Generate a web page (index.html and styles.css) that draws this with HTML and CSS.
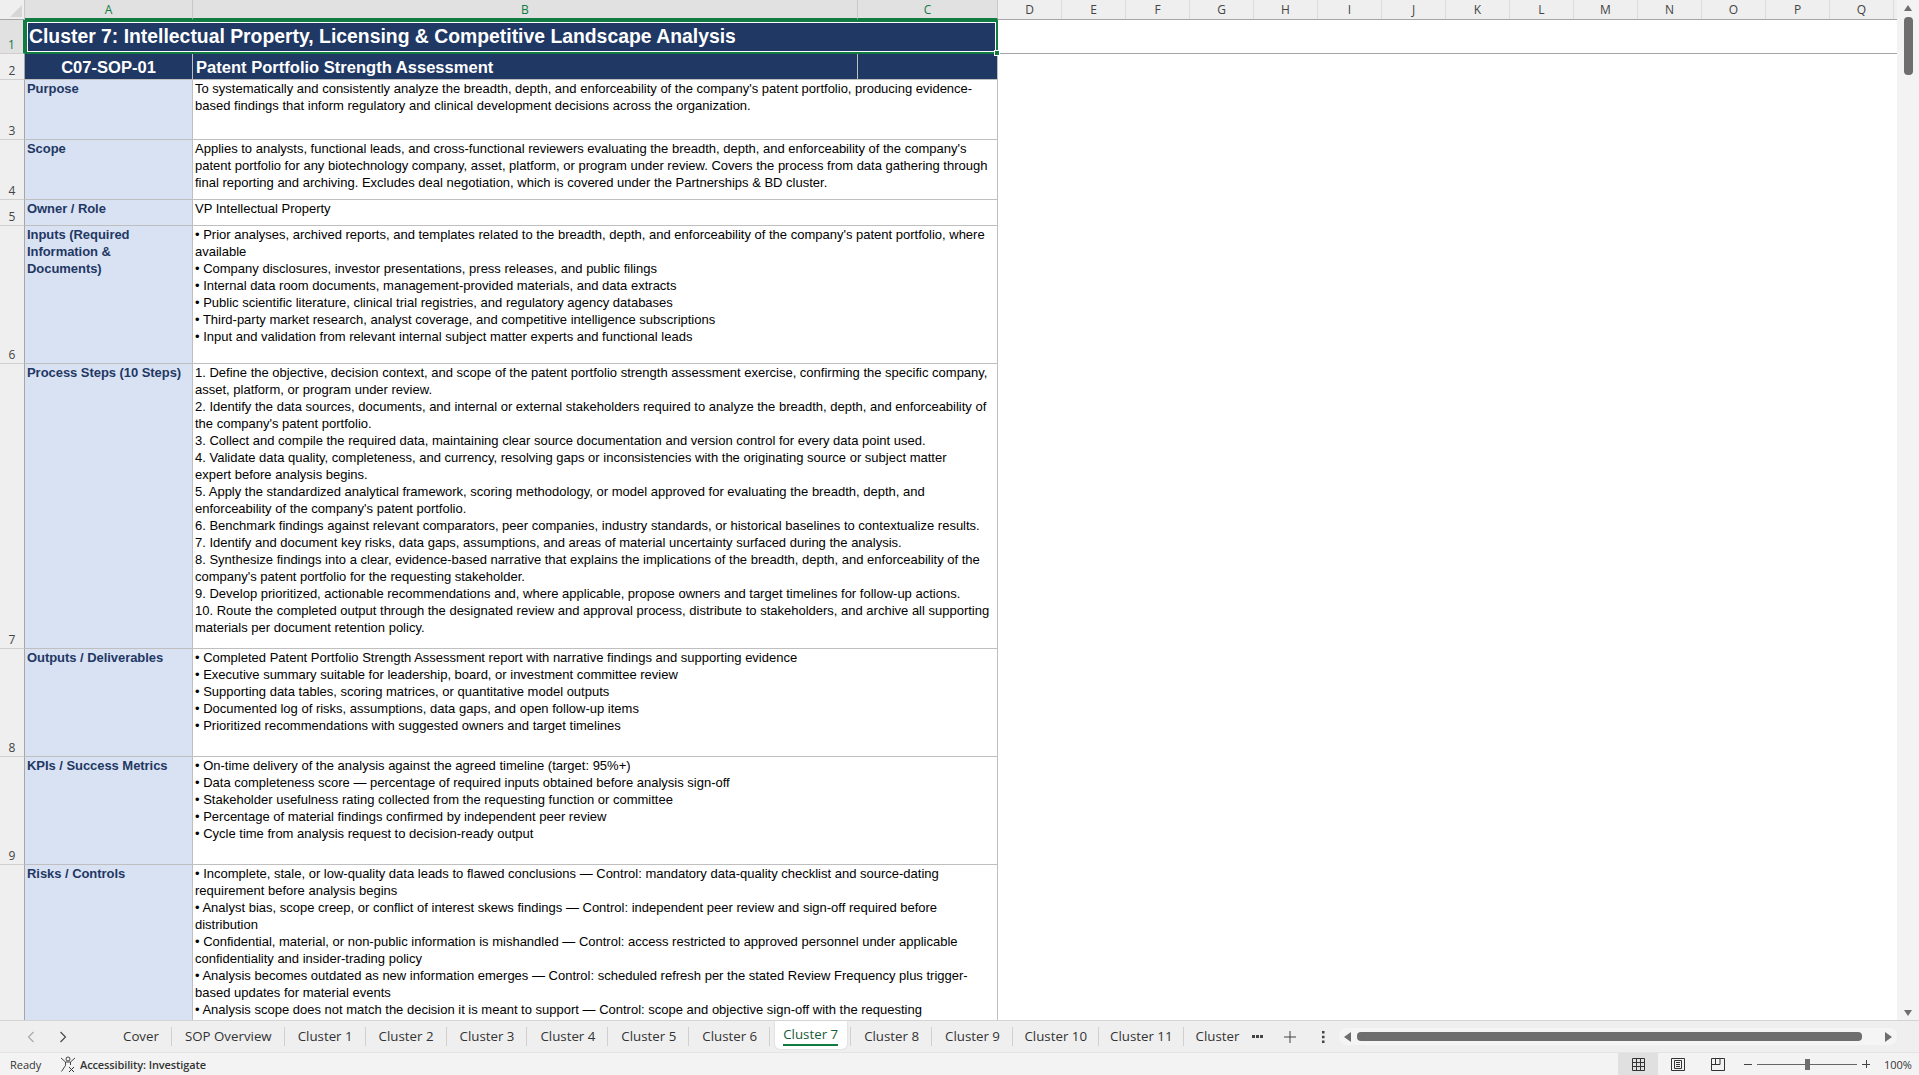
FILE: index.html
```html
<!DOCTYPE html>
<html lang="en">
<head>
  <meta charset="UTF-8" />
  <title>SOP Library - Cluster 7</title>
  <link rel="stylesheet" href="styles.css">
</head>
<body>

<div class="app">
  <div class="sheet-area">
    <div class="sheet">
      <!-- column headers -->
      <div class="corner"><span class="corner-mark"></span></div>
      <div class="col-head selected">A</div>
      <div class="col-head selected">B</div>
      <div class="col-head selected">C</div>
      <div class="col-rest">
        <span>D</span><span>E</span><span>F</span><span>G</span><span>H</span><span>I</span><span>J</span>
        <span>K</span><span>L</span><span>M</span><span>N</span><span>O</span><span>P</span><span>Q</span>
      </div>

      <!-- row 1 -->
      <div class="row-num selected">1</div>
      <div class="cell title">Cluster 7: Intellectual Property, Licensing &amp; Competitive Landscape Analysis<span class="fill-handle"></span></div>
      <div class="empty frozen"></div>

      <!-- row 2 -->
      <div class="row-num">2</div>
      <div class="cell head head-id">C07-SOP-01</div>
      <div class="cell head head-name">Patent Portfolio Strength Assessment</div>
      <div class="cell head"></div>
      <div class="empty span-rows"></div>

      <!-- row 3 -->
      <div class="row-num">3</div>
      <div class="cell label">Purpose</div>
      <div class="cell body">To systematically and consistently analyze the breadth, depth, and enforceability of the company's patent portfolio, producing evidence-<br>based findings that inform regulatory and clinical development decisions across the organization.</div>

      <!-- row 4 -->
      <div class="row-num">4</div>
      <div class="cell label">Scope</div>
      <div class="cell body">Applies to analysts, functional leads, and cross-functional reviewers evaluating the breadth, depth, and enforceability of the company's<br>patent portfolio for any biotechnology company, asset, platform, or program under review. Covers the process from data gathering through<br>final reporting and archiving. Excludes deal negotiation, which is covered under the Partnerships &amp; BD cluster.</div>

      <!-- row 5 -->
      <div class="row-num">5</div>
      <div class="cell label">Owner / Role</div>
      <div class="cell body">VP Intellectual Property</div>

      <!-- row 6 -->
      <div class="row-num">6</div>
      <div class="cell label">Inputs (Required<br>Information &amp;<br>Documents)</div>
      <div class="cell body">• Prior analyses, archived reports, and templates related to the breadth, depth, and enforceability of the company's patent portfolio, where<br>available<br>• Company disclosures, investor presentations, press releases, and public filings<br>• Internal data room documents, management-provided materials, and data extracts<br>• Public scientific literature, clinical trial registries, and regulatory agency databases<br>• Third-party market research, analyst coverage, and competitive intelligence subscriptions<br>• Input and validation from relevant internal subject matter experts and functional leads</div>

      <!-- row 7 -->
      <div class="row-num">7</div>
      <div class="cell label">Process Steps (10 Steps)</div>
      <div class="cell body">1. Define the objective, decision context, and scope of the patent portfolio strength assessment exercise, confirming the specific company,<br>asset, platform, or program under review.<br>2. Identify the data sources, documents, and internal or external stakeholders required to analyze the breadth, depth, and enforceability of<br>the company's patent portfolio.<br>3. Collect and compile the required data, maintaining clear source documentation and version control for every data point used.<br>4. Validate data quality, completeness, and currency, resolving gaps or inconsistencies with the originating source or subject matter<br>expert before analysis begins.<br>5. Apply the standardized analytical framework, scoring methodology, or model approved for evaluating the breadth, depth, and<br>enforceability of the company's patent portfolio.<br>6. Benchmark findings against relevant comparators, peer companies, industry standards, or historical baselines to contextualize results.<br>7. Identify and document key risks, data gaps, assumptions, and areas of material uncertainty surfaced during the analysis.<br>8. Synthesize findings into a clear, evidence-based narrative that explains the implications of the breadth, depth, and enforceability of the<br>company's patent portfolio for the requesting stakeholder.<br>9. Develop prioritized, actionable recommendations and, where applicable, propose owners and target timelines for follow-up actions.<br>10. Route the completed output through the designated review and approval process, distribute to stakeholders, and archive all supporting<br>materials per document retention policy.</div>

      <!-- row 8 -->
      <div class="row-num">8</div>
      <div class="cell label">Outputs / Deliverables</div>
      <div class="cell body">• Completed Patent Portfolio Strength Assessment report with narrative findings and supporting evidence<br>• Executive summary suitable for leadership, board, or investment committee review<br>• Supporting data tables, scoring matrices, or quantitative model outputs<br>• Documented log of risks, assumptions, data gaps, and open follow-up items<br>• Prioritized recommendations with suggested owners and target timelines</div>

      <!-- row 9 -->
      <div class="row-num">9</div>
      <div class="cell label">KPIs / Success Metrics</div>
      <div class="cell body">• On-time delivery of the analysis against the agreed timeline (target: 95%+)<br>• Data completeness score — percentage of required inputs obtained before analysis sign-off<br>• Stakeholder usefulness rating collected from the requesting function or committee<br>• Percentage of material findings confirmed by independent peer review<br>• Cycle time from analysis request to decision-ready output</div>

      <!-- row 10 -->
      <div class="row-num"></div>
      <div class="cell label">Risks / Controls</div>
      <div class="cell body">• Incomplete, stale, or low-quality data leads to flawed conclusions — Control: mandatory data-quality checklist and source-dating<br>requirement before analysis begins<br>• Analyst bias, scope creep, or conflict of interest skews findings — Control: independent peer review and sign-off required before<br>distribution<br>• Confidential, material, or non-public information is mishandled — Control: access restricted to approved personnel under applicable<br>confidentiality and insider-trading policy<br>• Analysis becomes outdated as new information emerges — Control: scheduled refresh per the stated Review Frequency plus trigger-<br>based updates for material events<br>• Analysis scope does not match the decision it is meant to support — Control: scope and objective sign-off with the requesting</div>
    </div>

    <div class="vscroll">
      <span class="arrow-up"></span>
      <span class="vthumb"></span>
      <span class="arrow-down"></span>
    </div>
  </div>

  <div class="tabbar">
    <div class="tab-nav">
      <svg width="8" height="12" viewBox="0 0 8 12"><path d="M6.5 1 1.5 6l5 5" fill="none" stroke="#a6a6a6" stroke-width="1.1"/></svg>
      <svg width="8" height="12" viewBox="0 0 8 12"><path d="M1.5 1l5 5-5 5" fill="none" stroke="#444" stroke-width="1.1"/></svg>
    </div>
    <div class="tabs">
      <span class="tab">Cover</span>
      <span class="tab">SOP Overview</span>
      <span class="tab">Cluster 1</span>
      <span class="tab">Cluster 2</span>
      <span class="tab">Cluster 3</span>
      <span class="tab">Cluster 4</span>
      <span class="tab">Cluster 5</span>
      <span class="tab">Cluster 6</span>
      <span class="tab active">Cluster 7</span>
      <span class="tab">Cluster 8</span>
      <span class="tab">Cluster 9</span>
      <span class="tab tight">Cluster 10</span>
      <span class="tab tight">Cluster 11</span>
      <span class="tab tight last">Cluster</span>
    </div>
    <div class="tab-tools">
      <svg width="11" height="4" viewBox="0 0 11 4"><path d="M0 0h3v3H0zM4 0h3v3H4zM8 0h3v3H8z" fill="#444"/></svg>
      <svg class="tool-plus" width="12" height="12" viewBox="0 0 12 12"><path d="M6 0v12M0 6h12" stroke="#444" stroke-width="1"/></svg>
      <svg class="tool-kebab" width="3" height="12" viewBox="0 0 3 12"><path d="M0 0h2.500v2.500H0zM0 4.800h2.500v2.500H0zM0 9.500h2.500V12H0z" fill="#444"/></svg>
    </div>
    <div class="hscroll">
      <svg width="7" height="10" viewBox="0 0 7 10"><path d="M7 0v10L0 5z" fill="#6e6e6e"/></svg>
      <span class="hthumb"></span>
      <svg width="7" height="10" viewBox="0 0 7 10"><path d="M0 0v10l7-5z" fill="#6e6e6e"/></svg>
    </div>
  </div>

  <div class="statusbar">
    <div class="status-left">
      <span class="ready">Ready</span>
      <svg class="a11y-icon" width="16" height="17" viewBox="0 0 16 17" fill="none" stroke="#444" stroke-width="1">
        <circle cx="8" cy="3" r="2"/>
        <path d="M1 2l4.500 4h5L15 2M5.500 6v3.500L1.500 15.500M10.500 6v3"/>
        <path d="M9 11l5 5M14 11l-5 5" stroke="#333"/>
      </svg>
      <span class="a11y-text">Accessibility: Investigate</span>
    </div>
    <div class="status-right">
      <span class="view active">
        <svg width="13" height="13" viewBox="0 0 13 13" fill="none" stroke="#333"><path d="M.5.500h12v12H.500zM4.500.500v12M8.500.500v12M.500 4.500h12M.500 8.500h12"/></svg>
      </span>
      <span class="view">
        <svg width="14" height="13" viewBox="0 0 14 13" fill="none" stroke="#333"><path d="M.5.500h13v12H.500zM3.500 2.500h7v8h-7zM5 4.500h4M5 6.500h4M5 8.500h4"/></svg>
      </span>
      <span class="view">
        <svg width="14" height="13" viewBox="0 0 14 13" fill="none" stroke="#333"><path d="M.5.500h13v12H.500zM.500 6.500h8.500M4.500.500v6M9 .500v6"/></svg>
      </span>
      <span class="zoom-minus"></span>
      <span class="zoom-track"><span class="zoom-thumb"></span></span>
      <span class="zoom-plus"></span>
      <span class="zoom-value">100%</span>
    </div>
  </div>
</div>

</body>
</html>
```
FILE: styles.css
```css
* { box-sizing: border-box; }
html, body { margin: 0; height: 100%; overflow: hidden; }
body { font-family: "Liberation Sans", Arial, sans-serif; background: #f3f3f3; color: #000; }

.app { display: flex; flex-direction: column; height: 1075px; }

/* grid area */
.sheet-area { display: flex; height: 1021px; overflow: hidden; border-bottom: 1px solid #d4d4d4; }
.sheet {
  width: 1897px;
  flex: none;
  display: grid;
  grid-template-columns: 25px 168px 665px 140px 899px;
  grid-template-rows: 20px 34px 26px 60px 60px 26px 138px 285px 108px 108px 157px;
  background: white;
  border-right: 1px solid #d4d4d4;
}
.corner { background: #efefef; border-right: 1px solid #c8c8c8; border-bottom: 1px solid #a6a6a6; position: relative; }
.corner-mark {
  position: absolute;
  right: 2px;
  bottom: 2px;
  border-left: 12px solid transparent;
  border-bottom: 12px solid #d6d6d6;
}
.col-head, .col-rest span, .row-num {
  font-family: "Open Sans", sans-serif;
  font-size: 12px;
  color: #444;
  background: #efefef;
}
.col-head {
  display: flex;
  align-items: center;
  justify-content: center;
  border-right: 1px solid #c8c8c8;
}
.col-head.selected { background: #e1e1e1; color: #107c41; border-bottom: 2px solid #107c41; }
.col-rest { display: flex; background: #efefef; border-bottom: 1px solid #a6a6a6; }
.col-rest span {
  width: 64px;
  flex: none;
  display: flex;
  align-items: center;
  justify-content: center;
  border-right: 1px solid #dcdcdc;
}
.row-num {
  display: flex;
  align-items: flex-end;
  justify-content: center;
  line-height: 17px;
  border-right: 1px solid #a6a6a6;
  border-bottom: 1px solid #cfcfcf;
}
.row-num.selected { color: #107c41; background: #e1e1e1; border-right: 2px solid #107c41; }

.cell { overflow: hidden; white-space: nowrap; }
.title {
  grid-column: 2 / span 3;
  position: relative;
  overflow: visible;
  background: #1f3864;
  color: white;
  font-weight: 700;
  font-size: 19.360px;
  line-height: 29px;
  padding-left: 2px;
  border: 2px solid #107c41;
  outline: 1px solid white;
  outline-offset: -3px;
}
.fill-handle {
  position: absolute;
  right: -4px;
  bottom: -4px;
  width: 6px;
  height: 6px;
  background: #107c41;
  border: 1px solid white;
}
.empty { background: white; }
.empty.frozen { border-bottom: 1px solid #a6a6a6; }
.empty.span-rows { grid-column: 5; grid-row: 3 / span 9; }

.head {
  background: #1f3864;
  color: white;
  font-weight: 700;
  font-size: 16.560px;
  line-height: 27px;
  border-right: 1px solid #bfbfbf;
  border-bottom: 1px solid #bfbfbf;
}
.head-id { text-align: center; }
.head-name { padding-left: 3px; }

.label {
  background: #d9e2f3;
  color: #1f3864;
  font-weight: 700;
  font-size: 13px;
  letter-spacing: -0.05px;
  line-height: 17px;
  padding-left: 2px;
  border-right: 1px solid #bfbfbf;
  border-bottom: 1px solid #bfbfbf;
}
.body {
  grid-column: 3 / span 2;
  background: white;
  font-size: 13px;
  line-height: 17px;
  padding-left: 2px;
  border-right: 1px solid #bfbfbf;
  border-bottom: 1px solid #bfbfbf;
}

/* scrollbar on the right */
.vscroll { flex: 1; position: relative; background: #f3f3f3; }
.vthumb {
  position: absolute;
  left: 7px;
  top: 17px;
  width: 9px;
  height: 58px;
  border-radius: 4px;
  background: #6e6e6e;
}
.arrow-up, .arrow-down { position: absolute; left: 7px; border-left: 4.500px solid transparent; border-right: 4.500px solid transparent; }
.arrow-up { top: 5px; border-bottom: 6px solid #6e6e6e; }
.arrow-down { bottom: 4px; border-top: 6px solid #6e6e6e; }

/* sheet tabs */
.tabbar { display: flex; align-items: flex-start; height: 32px; background: #efefef; border-bottom: 1px solid #e4e4e4; }
.tab-nav { width: 110px; flex: none; display: flex; gap: 24px; padding: 10px 0 0 27px; }
.tabs { display: flex; width: 1138px; flex: none; overflow: hidden; font-family: "Open Sans", sans-serif; font-size: 13.300px; color: #333; }
.tab { position: relative; padding: 0 13px; line-height: 31px; height: 31px; white-space: nowrap; }
.tab.tight { padding: 0 11.500px; }
.tab::after {
  content: "";
  position: absolute;
  right: 0;
  top: 6px;
  height: 19px;
  border-right: 1px solid #d0d0d0;
}
.tab.last::after { display: none; }
.tab.active {
  height: 28px;
  margin: 0 4px 0 5px;
  padding: 0 9px 0 8px;
  line-height: 26px;
  background: white;
  color: #185c37;
  font-weight: 500;
  border-radius: 0 0 5px 5px;
  box-shadow: 0 0 2px #c4c4c4;
}
.tab.active::after { right: -4px; }
.tab.active::before {
  content: "";
  position: absolute;
  left: 8px;
  right: 9px;
  bottom: 3px;
  border-bottom: 2px solid #107c41;
}
.tab-tools { flex: none; width: 91px; display: flex; align-items: center; height: 31px; padding-left: 4px; }
.tool-plus { margin-left: 21px; }
.tool-kebab { margin-left: 26px; }
.hscroll {
  flex: none;
  width: 558px;
  height: 17px;
  margin-top: 7px;
  display: flex;
  align-items: center;
  gap: 6px;
  padding: 0 5px;
  background: #f5f5f5;
  border-radius: 8px;
}
.hthumb { flex: none; width: 505px; height: 9px; border-radius: 4px; background: #6e6e6e; margin-right: 17px; }

/* status bar */
.statusbar { flex: 1; display: flex; justify-content: space-between; background: #f3f3f3; font-family: "Open Sans", sans-serif; font-size: 11px; color: #333; }
.status-left { display: flex; align-items: center; padding-left: 10px; }
.ready { width: 50px; }
.a11y-text { margin-left: 4px; font-weight: 600; letter-spacing: -0.12px; }
.status-right { display: flex; align-items: center; padding-right: 8px; }
.view { width: 40px; height: 100%; display: flex; align-items: center; justify-content: center; }
.view.active { background: #e0e0e0; }
.zoom-minus { width: 8px; height: 1px; background: #444; margin-left: 6px; }
.zoom-track { position: relative; width: 100px; height: 1px; background: #666; margin-left: 5px; }
.zoom-thumb { position: absolute; left: 48px; top: -5px; width: 5px; height: 11px; background: #6e6e6e; }
.zoom-plus { position: relative; width: 8px; height: 1px; background: #444; margin-left: 5px; }
.zoom-plus::after { content: ""; position: absolute; left: 3.500px; top: -3.500px; width: 1px; height: 8px; background: #444; }
.zoom-value { margin-left: 14px; width: 27px; }
```
